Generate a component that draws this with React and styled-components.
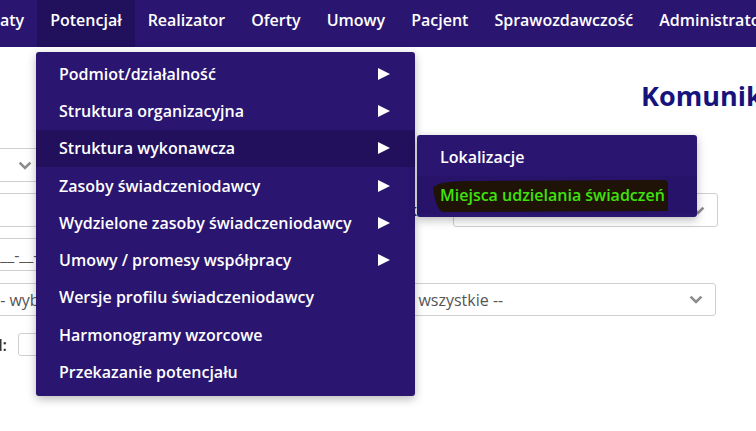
import styled, { createGlobalStyle } from "styled-components"

const Global = createGlobalStyle`
    html, body {
        margin: 0;
        padding: 0;
        background: #fff;
        font-family: "Open Sans", "DejaVu Sans", sans-serif;
    }
`

const Page = styled.div`
    position: relative;
    width: 756px;
    height: 431px;
    overflow: hidden;
    background: #fff;
`

const NavBar = styled.nav`
    display: flex;
    height: 47px;
    background: #2a1570;
    white-space: nowrap;
`

const NavItem = styled.div`
    padding: 7px 13px 0 ${p => (p.$first ? "0" : "13px")};
    line-height: 26px;
    font-size: 16px;
    font-weight: 600;
    color: #fff;
    background: ${p => (p.$active ? "#21105c" : "transparent")};
`

const Main = styled.main`
    display: flex;
    flex-direction: column;
`

const Heading = styled.h1`
    margin: 31px 0 0 641px;
    font-size: 27px;
    line-height: 36px;
    font-weight: 700;
    color: #16137d;
    white-space: nowrap;
`

const Row = styled.div`
    display: flex;
    align-items: center;
    margin-top: ${p => p.$gap}px;
    height: ${p => p.$h || 34}px;
`

const Field = styled.div`
    box-sizing: border-box;
    display: flex;
    align-items: center;
    justify-content: space-between;
    flex-shrink: 0;
    width: ${p => p.$w}px;
    height: 100%;
    margin-left: ${p => p.$ml || 0}px;
    padding: 0 12px 0 8px;
    border: 1px solid #cfcfcf;
    border-radius: 3px;
    font-size: 16px;
    color: #555;
    white-space: nowrap;
    overflow: hidden;
    background: #fff;
`

const Label = styled.div`
    flex-shrink: 0;
    width: ${p => p.$w}px;
    margin-left: ${p => p.$ml || 0}px;
    text-align: right;
    font-size: 16px;
    font-weight: 600;
    color: #333;
    white-space: nowrap;
`

const Menu = styled.ul`
    position: absolute;
    left: ${p => p.$x}px;
    top: ${p => p.$y}px;
    width: ${p => p.$w}px;
    margin: 0;
    padding: 3px 0 ${p => p.$pb}px;
    list-style: none;
    box-sizing: border-box;
    background: #2a1570;
    border-radius: 3px;
    box-shadow: 0 3px 10px rgba(0, 0, 0, 0.28);
`

const MenuItem = styled.li`
    position: relative;
    display: flex;
    align-items: center;
    justify-content: space-between;
    height: ${p => p.$h}px;
    padding: 0 25px 0 23px;
    font-size: 16px;
    font-weight: 600;
    color: #fff;
    white-space: nowrap;
    background: ${p => (p.$hover ? p.$hover : "transparent")};
`

const MarkedText = styled.span`
    position: relative;
    z-index: 1;
    color: #3fe30b;
`

const Marker = styled.svg`
    position: absolute;
    left: 16px;
    top: 4px;
`

const Chevron = () => (
    <svg width="14" height="9" viewBox="0 0 14 9">
        <path d="M1.6 1.6 L7 7 L12.4 1.6" fill="none" stroke="#8d8d8d" strokeWidth="2.6" />
    </svg>
)

const Arrow = () => (
    <svg width="12" height="12" viewBox="0 0 12 12">
        <polygon points="0,0 12,6 0,12" fill="#fff" />
    </svg>
)

const navItems = ["aty", "Potencjał", "Realizator", "Oferty", "Umowy", "Pacjent", "Sprawozdawczość", "Administrator"]

const menuItems = [
    ["Podmiot/działalność", true],
    ["Struktura organizacyjna", true],
    ["Struktura wykonawcza", true],
    ["Zasoby świadczeniodawcy", true],
    ["Wydzielone zasoby świadczeniodawcy", true],
    ["Umowy / promesy współpracy", true],
    ["Wersje profilu świadczeniodawcy", false],
    ["Harmonogramy wzorcowe", false],
    ["Przekazanie potencjału", false],
]

export default function App() {
    return (
        <>
            <Global />
            <Page>
                <NavBar>
                    {navItems.map((n, i) => (
                        <NavItem key={n} $first={i === 0} $active={n === "Potencjał"}>{n}</NavItem>
                    ))}
                </NavBar>

                <Main>
                    <Heading>Komunikaty</Heading>

                    <Row $gap={34}>
                        <Field $w={59} $ml={-14}><span></span><Chevron /></Field>
                    </Row>
                    <Row $gap={11}>
                        <Field $w={52} $ml={-14} />
                        <Label $w={200} $ml={209}>Status komunikatu:</Label>
                        <Field $w={265} $ml={6}><span></span><Chevron /></Field>
                    </Row>
                    <Row $gap={11} $h={33}>
                        <Field $w={52} $ml={-14}>-__-__-____</Field>
                    </Row>
                    <Row $gap={12} $h={33}>
                        <Field $w={52} $ml={-14}>-- wybierz --</Field>
                        <Field $w={321} $ml={357}><span>-- wszystkie --</span><Chevron /></Field>
                    </Row>
                    <Row $gap={17} $h={23}>
                        <Label $w={40} $ml={-33}>Kod:</Label>
                        <Field $w={60} $ml={11} />
                    </Row>
                </Main>

                <Menu $x={36} $y={52} $w={379} $pb={5}>
                    {menuItems.map(([t, sub]) => (
                        <MenuItem key={t} $h={37.3} $hover={t === "Struktura wykonawcza" ? "#22105d" : null}>
                            {t}
                            {sub && <Arrow />}
                        </MenuItem>
                    ))}
                </Menu>

                <Menu $x={417} $y={135} $w={280} $pb={3}>
                    <MenuItem $h={38}>Lokalizacje</MenuItem>
                    <MenuItem $h={38} $hover="#27136a">
                        <Marker width="236" height="33" viewBox="0 0 236 33">
                            <path
                                d="M0 8 C4 3 14 1 40 1 L230 0 C234 0 235 2 235 5 L235 31 L12 32 C4 32 2 20 0 8 Z"
                                fill="#1e1306"
                            />
                        </Marker>
                        <MarkedText>Miejsca udzielania świadczeń</MarkedText>
                    </MenuItem>
                </Menu>
            </Page>
        </>
    )
}
